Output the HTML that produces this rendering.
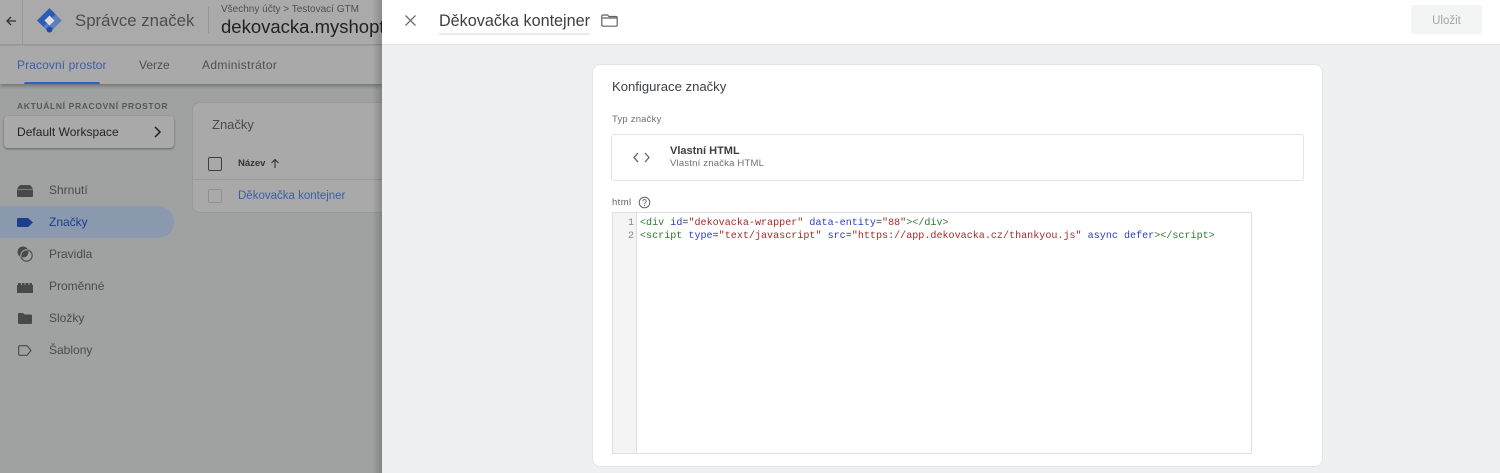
<!DOCTYPE html>
<html lang="cs"><head><meta charset="utf-8"><title>Správce značek</title>
<style>
*{box-sizing:border-box}
html,body{margin:0;padding:0;width:1500px;height:473px;overflow:hidden;background:#a0a2a1;font-family:"Liberation Sans",sans-serif}
.a{position:absolute;white-space:nowrap}
svg{position:absolute;display:block}
.nav{left:49px;font-size:12px;color:#4a4b4c;line-height:16px}
.code span{white-space:pre}
.t{color:#2f7a2f}.k{color:#2b3cc4}.s{color:#a52a2a}.p{color:#333}
</style></head><body>
<div class="a" style="left:0;top:0;width:382px;height:45px;background:#aaaaaa;border-bottom:1px solid #999a9a"></div>
<div class="a" style="left:0;top:46px;width:382px;height:38px;background:#a9a9a9;box-shadow:0 2px 4px rgba(0,0,0,.3)"></div>
<div class="a" style="left:22px;top:0;width:1px;height:45px;background:#9a9a9a"></div>
<svg style="left:4px;top:14px" width="14" height="14" viewBox="0 0 14 14"><path d="M12 7H3M7 3L3 7l4 4" fill="none" stroke="#333" stroke-width="1.3"/></svg>
<svg style="left:37px;top:8px" width="25" height="25" viewBox="0 0 25 25"><path d="M12.500.8L24.200 12.500 12.500 24.200.8 12.500z" fill="#5c7fbd" stroke="#5c7fbd" stroke-linejoin="round"/><path d="M12.500.8L.8 12.500l5.500 5.500L18 6.300z" fill="#2c5cb5" stroke="#2c5cb5" stroke-linejoin="round"/><circle cx="12.500" cy="21.500" r="3" fill="#1f4ea0"/><path d="M12.500 7.500l5 5-5 5-5-5z" fill="#dcdde0"/></svg>
<div class="a" style="left:75px;top:9px;font-size:16.800px;line-height:24px;color:#4c4d4e">Správce značek</div>
<div class="a" style="left:208px;top:7px;width:1px;height:26px;background:#959595"></div>
<div class="a" style="left:221px;top:3px;font-size:10px;line-height:13px;color:#4f5051">Všechny účty &gt; Testovací GTM</div>
<div class="a" style="left:221px;top:15px;width:161px;overflow:hidden;font-size:18.500px;line-height:24px;color:#1f2021">dekovacka.myshoptet.com</div>
<div class="a" style="left:17px;top:57px;font-size:12px;line-height:16px;color:#3a5fa8;letter-spacing:.1px">Pracovní prostor</div>
<div class="a" style="left:24px;top:82px;width:76px;height:2px;background:#2f62c0;border-radius:2px 2px 0 0"></div>
<div class="a" style="left:139px;top:57px;font-size:12px;line-height:16px;color:#4f5051">Verze</div>
<div class="a" style="left:202px;top:57px;font-size:12px;line-height:16px;color:#4f5051;letter-spacing:.35px">Administrátor</div>

<div class="a" style="left:17px;top:100px;font-size:8.500px;line-height:12px;font-weight:bold;color:#55585a;letter-spacing:.65px">AKTUÁLNÍ PRACOVNÍ PROSTOR</div>
<div class="a" style="left:4px;top:116px;width:170px;height:32px;background:#a9a9a9;border-radius:4px;box-shadow:0 1px 2px rgba(0,0,0,.4)"></div>
<div class="a" style="left:17px;top:124px;font-size:12px;line-height:16px;color:#222324;letter-spacing:.03px">Default Workspace</div>
<svg style="left:153px;top:126px" width="10" height="12" viewBox="0 0 10 12"><path d="M2 1l5 5-5 5" fill="none" stroke="#222" stroke-width="1.500"/></svg>

<div class="a" style="left:0;top:206px;width:174px;height:32px;background:#8a99ae;border-radius:0 16px 16px 0"></div>
<svg style="left:17px;top:185px" width="16" height="12" viewBox="0 0 16 12"><path d="M4 0h8q1.500 0 2 1l2 3v7q0 1-1 1H1q-1 0-1-1V4l2-3q.5-1 2-1z" fill="#48494b"/><path d="M0 4.500h16" stroke="#a0a2a1" stroke-width=".6"/></svg>
<div class="a nav" style="top:182px">Shrnutí</div>
<svg style="left:17px;top:218px" width="16" height="9" viewBox="0 0 16 9"><path d="M1 0h10l5 4.500-5 4.500H1q-1 0-1-1V1q0-1 1-1z" fill="#1d3f8e"/></svg>
<div class="a nav" style="top:214px;color:#1d3f8e">Značky</div>
<svg style="left:17px;top:246px" width="16" height="16" viewBox="0 0 16 16"><defs><clipPath id="c"><circle cx="6" cy="6" r="5.500"/></clipPath></defs><circle cx="9.500" cy="9.500" r="5.700" fill="none" stroke="#48494b" stroke-width="1.100"/><circle cx="6" cy="6" r="5.500" fill="#48494b"/><circle cx="9.500" cy="9.500" r="5.700" fill="none" stroke="#a0a2a1" stroke-width="1.100" clip-path="url(#c)"/></svg>
<div class="a nav" style="top:246px">Pravidla</div>
<svg style="left:17px;top:282px" width="16" height="11" viewBox="0 0 16 11"><path d="M0 3h1V1h3v2h1V1h2.500v2h1V1h3v2h1V1H15v2h1v8H0z" fill="#48494b"/></svg>
<div class="a nav" style="top:278px">Proměnné</div>
<svg style="left:18px;top:313px" width="14" height="11" viewBox="0 0 14 11"><path d="M1 0h4l1.500 1.500H13q1 0 1 1V10q0 1-1 1H1q-1 0-1-1V1q0-1 1-1z" fill="#48494b"/></svg>
<div class="a nav" style="top:310px">Složky</div>
<svg style="left:18px;top:345px" width="14" height="11" viewBox="0 0 14 11"><path d="M2 .7h7l4 4.800-4 4.800H2q-1.300 0-1.300-1.300V2Q.7.700 2 .7z" fill="none" stroke="#48494b" stroke-width="1.100"/></svg>
<div class="a nav" style="top:342px">Šablony</div>

<div class="a" style="left:193px;top:103px;width:189px;height:109px;background:#a9a9a9;border-radius:6px 0 0 6px;box-shadow:0 0 1px rgba(0,0,0,.35)"></div>
<div class="a" style="left:212px;top:115px;font-size:13px;line-height:20px;color:#4a4b4c">Značky</div>
<div class="a" style="left:208px;top:157px;width:14px;height:14px;border:1.500px solid #3d3e40;border-radius:2px"></div>
<div class="a" style="left:238px;top:157px;font-size:9.500px;line-height:14px;font-weight:bold;color:#333">Název</div>
<svg style="left:270px;top:158px" width="10" height="11" viewBox="0 0 10 11"><path d="M5 10V2M1.500 5L5 1.500 8.500 5" fill="none" stroke="#333" stroke-width="1.100"/></svg>
<div class="a" style="left:193px;top:179px;width:189px;height:1px;background:#999a9a"></div>
<div class="a" style="left:208px;top:189px;width:14px;height:14px;border:1px solid #929292;border-radius:2px"></div>
<div class="a" style="left:238px;top:189px;font-size:11.500px;line-height:15px;color:#3a5fa8">Děkovačka kontejner</div>

<div class="a" style="left:372px;top:0;width:10px;height:473px;background:linear-gradient(to right,rgba(0,0,0,0),rgba(0,0,0,.18))"></div>
<div class="a" style="left:382px;top:0;width:1118px;height:473px;background:#eff0f2"></div>
<div class="a" style="left:382px;top:0;width:1118px;height:45px;background:#fff;border-bottom:1px solid #e2e3e5"></div>
<svg style="left:404px;top:14px" width="13" height="13" viewBox="0 0 13 13"><path d="M1.500 1.500l10 10M11.500 1.500l-10 10" stroke="#6d6e70" stroke-width="1.300" fill="none"/></svg>
<div class="a" style="left:439px;top:9px;font-size:16.180px;line-height:24px;color:#3c4043">Děkovačka kontejner</div>
<div class="a" style="left:439px;top:33px;width:151px;height:2px;background:#eaebec"></div>
<svg style="left:601px;top:14px" width="17" height="13" viewBox="0 0 17 13"><path d="M2 1h4.500L8 2.500h7q1.200 0 1.200 1.200V11q0 1.200-1.200 1.200H2Q.8 12.200.8 11V2.200Q.8 1 2 1zM.8 4h15.400" fill="none" stroke="#5f6368" stroke-width="1.200"/></svg>
<div class="a" style="left:1411px;top:5px;width:71px;height:29px;background:#f3f4f4;border-radius:3px;text-align:center;font-size:11.500px;line-height:33px;color:#a3a4a6">Uložit</div>

<div class="a" style="left:592px;top:64px;width:731px;height:403px;background:#fff;border:1px solid #e2e3e5;border-radius:8px"></div>
<div class="a" style="left:612px;top:78px;font-size:13.100px;line-height:18px;color:#3c4043">Konfigurace značky</div>
<div class="a" style="left:612px;top:113px;font-size:9.500px;line-height:13px;color:#6d7074;letter-spacing:.2px">Typ značky</div>
<div class="a" style="left:611px;top:134px;width:693px;height:47px;background:#fff;border:1px solid #e2e3e5;border-radius:3px"></div>
<svg style="left:633px;top:152px" width="17" height="11" viewBox="0 0 17 11"><path d="M5 1L1 5.500 5 10M12 1l4 4.500L12 10" fill="none" stroke="#5f6368" stroke-width="1.300"/></svg>
<div class="a" style="left:670px;top:144px;font-size:11px;line-height:14px;font-weight:bold;color:#3c4043">Vlastní HTML</div>
<div class="a" style="left:670px;top:157px;font-size:9.500px;line-height:13px;color:#6d7074;letter-spacing:.2px">Vlastní značka HTML</div>
<div class="a" style="left:612px;top:197px;font-size:9.500px;line-height:12px;color:#5f6368;letter-spacing:.4px">html</div>
<svg style="left:638px;top:196px" width="13" height="13" viewBox="0 0 13 13"><circle cx="6.500" cy="6.500" r="5.300" fill="none" stroke="#5f6368" stroke-width="1"/><path d="M4.800 5.200a1.700 1.700 0 1 1 2.700 1.400c-.6.400-1 .7-1 1.500" fill="none" stroke="#5f6368" stroke-width=".9"/><circle cx="6.500" cy="9.500" r=".6" fill="#5f6368"/></svg>

<div class="a" style="left:612px;top:212px;width:640px;height:242px;background:#fff;border:1px solid #dfe0e2"></div>
<div class="a" style="left:613px;top:213px;width:24px;height:240px;background:#f4f4f4;border-right:1px solid #dcdcdc"></div>
<div class="a" style="left:613px;top:218px;width:21px;text-align:right;font:10.080px/12.500px 'Liberation Mono',monospace;color:#888">1<br>2</div>
<div class="a code" style="left:640px;top:218px;font:10.080px/12.500px 'Liberation Mono',monospace"><span class="t">&lt;div</span> <span class="k">id</span><span class="p">=</span><span class="s">"dekovacka-wrapper"</span> <span class="k">data-entity</span><span class="p">=</span><span class="s">"88"</span><span class="t">&gt;&lt;/div&gt;</span><br><span class="t">&lt;script</span> <span class="k">type</span><span class="p">=</span><span class="s">"text/javascript"</span> <span class="k">src</span><span class="p">=</span><span class="s">"https://app.dekovacka.cz/thankyou.js"</span> <span class="k">async</span> <span class="k">defer</span><span class="t">&gt;&lt;/script&gt;</span></div>
</body></html>
